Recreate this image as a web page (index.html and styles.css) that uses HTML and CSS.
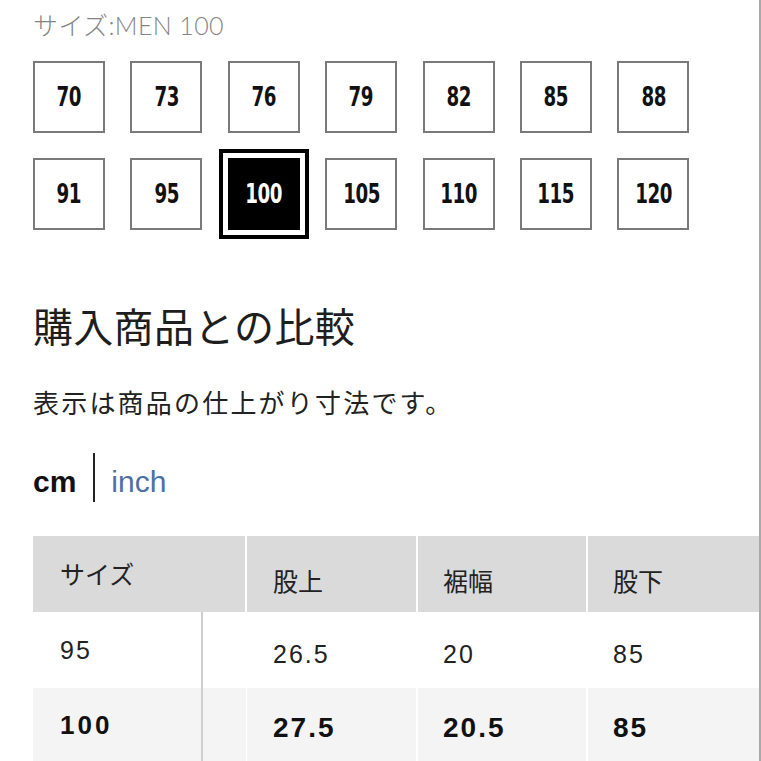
FILE: index.html
```html
<!DOCTYPE html>
<html lang="ja">
<head>
<meta charset="utf-8">
<title>サイズ比較</title>
<link rel="stylesheet" href="styles.css">
</head>
<body>
<div class="page">
  <div class="label">サイズ:MEN 100</div>
  <div class="sizes">
    <div class="size"><span class="num">70</span></div>
    <div class="size"><span class="num">73</span></div>
    <div class="size"><span class="num">76</span></div>
    <div class="size"><span class="num">79</span></div>
    <div class="size"><span class="num">82</span></div>
    <div class="size"><span class="num">85</span></div>
    <div class="size"><span class="num">88</span></div>
    <div class="size"><span class="num">91</span></div>
    <div class="size"><span class="num">95</span></div>
    <div class="size selected"><span class="num">100</span></div>
    <div class="size"><span class="num">105</span></div>
    <div class="size"><span class="num">110</span></div>
    <div class="size"><span class="num">115</span></div>
    <div class="size"><span class="num">120</span></div>
  </div>
  <h2 class="title">購入商品との比較</h2>
  <p class="note">表示は商品の仕上がり寸法です。</p>
  <div class="units">
    <span class="unit active">cm</span>
    <span class="sep"></span>
    <span class="unit link">inch</span>
  </div>
  <div class="table">
    <div class="thead">
      <div class="th th-size">サイズ</div>
      <div class="th">股上</div>
      <div class="th">裾幅</div>
      <div class="th last">股下</div>
    </div>
    <div class="row">
      <div class="td td-size">95</div>
      <div class="td filler"></div>
      <div class="td">26.5</div>
      <div class="td">20</div>
      <div class="td last">85</div>
    </div>
    <div class="row current">
      <div class="td td-size">100</div>
      <div class="td filler"></div>
      <div class="td">27.5</div>
      <div class="td">20.5</div>
      <div class="td last">85</div>
    </div>
  </div>
</div>
</body>
</html>
```

FILE: styles.css
```css
html, body {
  margin: 0;
  padding: 0;
  background: #fff;
}

.page {
  width: 761px;
  height: 761px;
  box-sizing: border-box;
  border-right: 2px solid #a9a9a9;
  padding-left: 33px;
  overflow: hidden;
  font-family: "Liberation Sans", "Noto Sans CJK JP", sans-serif;
  color: #111;
}

.label {
  padding-top: 10px;
  font-family: "Lato", "Noto Sans CJK JP", sans-serif;
  font-weight: 300;
  font-size: 25px;
  line-height: 30px;
  letter-spacing: 0.4px;
  color: #858585;
}

.sizes {
  margin-top: 21px;
  display: grid;
  grid-template-columns: repeat(7, 72px);
  column-gap: 25.4px;
  row-gap: 25px;
}

.size {
  width: 72px;
  height: 72px;
  box-sizing: border-box;
  border: 2px solid #7a7a7a;
  display: flex;
  align-items: center;
  justify-content: center;
  font-family: "DejaVu Sans Condensed", "Liberation Sans", sans-serif;
  font-weight: 700;
  font-size: 26px;
  line-height: 26px;
  color: #111;
}

.num {
  display: inline-block;
  transform: scaleX(0.78);
  letter-spacing: -0.5px;
}

.size.selected {
  background: #000;
  border-color: #000;
  color: #fff;
  box-shadow: 0 0 0 5px #fff, 0 0 0 9px #000;
}

.title {
  margin: 75px 0 0;
  font-family: "Noto Sans CJK JP", sans-serif;
  font-weight: 400;
  font-size: 40px;
  line-height: 40px;
  letter-spacing: 0.3px;
  color: #1e1e1e;
}

.note {
  margin: 44px 0 0;
  font-family: "Noto Sans CJK JP", sans-serif;
  font-weight: 400;
  font-size: 26px;
  line-height: 26px;
  letter-spacing: 2.2px;
  color: #222;
}

.units {
  margin-top: 38px;
  height: 49px;
  display: flex;
  align-items: flex-start;
}

.unit {
  margin-top: 14px;
  font-family: "Liberation Sans", sans-serif;
  font-size: 30px;
  line-height: 30px;
}

.unit.active {
  font-weight: 700;
  color: #111;
}

.sep {
  width: 2px;
  height: 49px;
  background: #222;
  margin: 0 16px 0 17px;
}

.unit.link {
  color: #4d6fa3;
}

.table {
  margin-top: 34px;
}

.thead {
  display: flex;
  gap: 2px;
  height: 76px;
}

.th {
  width: 169px;
  flex: none;
  box-sizing: border-box;
  background: #dadada;
  padding: 32px 0 0 26px;
  font-family: "Noto Sans CJK JP", sans-serif;
  font-size: 25px;
  line-height: 25px;
  color: #222;
}

.th.th-size {
  width: 212px;
  padding-top: 25px;
  padding-left: 27px;
}

.th:nth-child(3) {
  width: 168px;
  padding-left: 25px;
}

.th.last {
  flex: 1;
  padding-left: 25px;
}

.row {
  display: flex;
  gap: 2px;
  height: 76px;
}

.row .filler {
  width: 43px;
  margin-right: -1px;
}

.td {
  width: 169px;
  flex: none;
  box-sizing: border-box;
  padding: 30px 0 0 26px;
  font-family: "Liberation Sans", sans-serif;
  font-size: 25px;
  line-height: 25px;
  letter-spacing: 2px;
  color: #222;
}

.td.td-size {
  width: 170px;
  border-right: 2px solid #cfcfcf;
  padding-top: 26px;
  padding-left: 27px;
  margin-right: -2px;
}

.td:nth-child(4) {
  width: 168px;
  padding-left: 25px;
}

.td.last {
  flex: 1;
  padding-left: 25px;
}

.td.filler {
  padding: 0;
}

.row.current {
  height: 90px;
}

.row.current .td {
  background: #f4f4f4;
  font-weight: 700;
  font-size: 28px;
  line-height: 28px;
  padding-top: 26px;
  color: #111;
}

.row.current .td.td-size {
  font-size: 26px;
  line-height: 26px;
  letter-spacing: 3px;
  padding-top: 24px;
}
```
